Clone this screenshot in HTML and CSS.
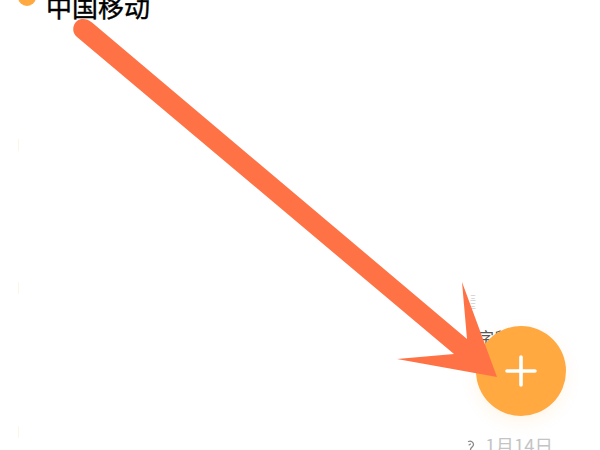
FILE: index.html
```html
<!DOCTYPE html>
<html lang="zh">
<head>
<meta charset="utf-8">
<title>中国移动</title>
<link rel="stylesheet" href="styles.css">
</head>
<body>
<main class="screen">
  <header class="carrier">
    <span class="dot"></span>
    <span class="name">中国移动</span>
  </header>
  <section class="feed">
    <div class="row row-first"><i class="tick"></i></div>
    <div class="row row-mid"><i class="tick"></i></div>
    <div class="row row-last">
      <i class="tick"></i>
      <span class="snippet">
        <span class="faint">三</span>
        <span class="faint">三</span>
        <span class="dark">字段</span>
      </span>
    </div>
    <div class="row-date">
      <svg class="ear" viewBox="0 0 8 11" width="8" height="11" aria-hidden="true"><path d="M1.500 1.500C4 0.500 6.500 2 6.500 4.500C6.500 7 4 7 3.500 9.500" fill="none" stroke="#888" stroke-width="1.300" stroke-linecap="round"/><path d="M2 5L3.500 4" fill="none" stroke="#888" stroke-width="1.100" stroke-linecap="round"/></svg>
      <span class="date">1月14日</span>
    </div>
  </section>
  <button class="fab" type="button" aria-label="添加">
    <svg viewBox="0 0 32 32" width="32" height="32"><path d="M16 2V30M2 16H30" fill="none" stroke="#fff" stroke-width="3.600" stroke-linecap="round"/></svg>
  </button>
  <svg class="arrow" viewBox="0 0 600 450" width="600" height="450" aria-hidden="true">
    <path fill="#FF7245" d="M77 37 C71 32 73 24 77 21 C81 18 87 18.500 92 22.500 L467 339 L462 282 L497 377 L397 359 L454 354 Z"/>
  </svg>
</main>
</body>
</html>
```
FILE: styles.css
```css
html, body {
  margin: 0;
  background: #fff;
}
.screen {
  position: relative;
  width: 600px;
  height: 450px;
  overflow: hidden;
  background: #fff;
  font-family: "Noto Sans CJK SC", "Noto Sans", sans-serif;
}
.carrier {
  display: flex;
  align-items: center;
  gap: 10px;
  height: 26px;
  margin-top: -7px;
  padding-left: 18px;
}
.dot {
  width: 18px;
  height: 18px;
  margin-top: -18px;
  border-radius: 50%;
  background: #FFA940;
}
.name {
  font-size: 26px;
  line-height: 26px;
  font-weight: 400;
  color: #000;
  -webkit-text-stroke: 0.4px #000;
}
.feed {
  display: flex;
  flex-direction: column;
}
.row {
  display: flex;
  justify-content: space-between;
  padding: 0 46px 0 18px;
}
.row-first {
  height: 132px;
}
.row-mid {
  height: 143px;
}
.row-last {
  height: 144px;
}
.tick {
  width: 1px;
  height: 12px;
  margin-top: auto;
  background: #fdf6e2;
}
.snippet {
  display: flex;
  flex-direction: column;
  width: 84px;
}
.faint {
  font-size: 6px;
  line-height: 8px;
  color: #bbb;
}
.dark {
  margin-top: 18px;
  margin-left: 8px;
  font-size: 16px;
  line-height: 18px;
  color: #555;
}
.row-date {
  display: flex;
  justify-content: flex-end;
  align-items: center;
  gap: 10px;
  height: 20px;
  margin-top: -3px;
  padding-right: 47px;
}
.ear {
  flex: none;
}
.date {
  font-size: 18.5px;
  line-height: 20px;
  color: #c4c4c4;
  white-space: nowrap;
}
.fab {
  position: absolute;
  left: 476px;
  top: 326px;
  display: flex;
  align-items: center;
  justify-content: center;
  width: 90px;
  height: 90px;
  padding: 0;
  border: 0;
  border-radius: 50%;
  background: #FFA940;
  box-shadow: 0 6px 16px rgba(255, 169, 64, 0.12);
}
.arrow {
  position: absolute;
  left: 0;
  top: 0;
}
```
